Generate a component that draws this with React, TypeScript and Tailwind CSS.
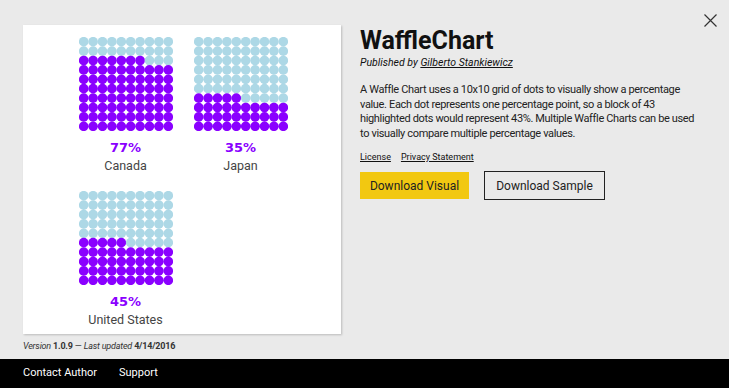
const PURPLE = "#8a00ff";
const LIGHT = "#add8e6";

type Waffle = { value: number; label: string };

const charts: Waffle[] = [
  { value: 77, label: "Canada" },
  { value: 35, label: "Japan" },
  { value: 45, label: "United States" },
];

function WaffleGrid({ value }: { value: number }) {
  const pitch = 9.44;
  const dots = [];
  for (let row = 0; row < 10; row++) {
    for (let col = 0; col < 10; col++) {
      // filled from the bottom row up, partial row fills from the left
      const fromBottom = 9 - row;
      const index = fromBottom * 10 + col;
      const on = index < value;
      dots.push(
        <circle
          key={`${row}-${col}`}
          cx={col * pitch + pitch / 2}
          cy={row * pitch + pitch / 2}
          r={4.85}
          fill={on ? PURPLE : LIGHT}
        />
      );
    }
  }
  return (
    <svg width="94" height="94" viewBox="0 0 94.4 94.4" className="block">
      {dots}
    </svg>
  );
}

function WaffleItem({ value, label }: Waffle) {
  return (
    <div className="flex h-[154px] w-[115px] flex-col items-center">
      <WaffleGrid value={value} />
      <div className="mt-[9px] font-['DejaVu_Sans'] text-[13px] leading-4 font-bold text-[#8a00ff]">
        {value}%
      </div>
      <div className="mt-[1px] text-[12.5px] leading-[18px] text-[#444]">{label}</div>
    </div>
  );
}

export default function App() {
  return (
    <div className="flex h-[388px] w-full flex-col bg-[#eaeaea] font-['Roboto',sans-serif] text-[#111]">
      <div className="relative flex flex-1 gap-[19px] pt-[25px] pl-[23px]">
        <div className="flex flex-col">
          <div className="flex h-[309px] w-[318px] flex-wrap content-start bg-white pt-[12px] pl-[45px] shadow-[1px_1px_2px_rgba(0,0,0,0.2)]">
            {charts.map((c) => (
              <WaffleItem key={c.label} {...c} />
            ))}
          </div>
          <p className="mt-[6px] text-[9px] leading-[12px] tracking-[-0.2px] text-[#333]">
            <i>Version</i> <b>1.0.9</b> — <i>Last updated</i> <b>4/14/2016</b>
          </p>
        </div>

        <div className="w-[340px] pt-[1px]">
          <h1 className="text-[25px] leading-[30px] font-bold text-[#111]">WaffleChart</h1>
          <p className="text-[10.5px] leading-[14px] italic">
            Published by <span className="underline">Gilberto Stankiewicz</span>
          </p>
          <p className="mt-[13px] text-[11px] leading-[14.5px] tracking-[-0.35px] text-[#222]">
            A Waffle Chart uses a 10x10 grid of dots to visually show a percentage
            <br />
            value. Each dot represents one percentage point, so a block of 43
            <br />
            highlighted dots would represent 43%. Multiple Waffle Charts can be used
            <br />
            to visually compare multiple percentage values.
          </p>
          <div className="mt-[10px] flex gap-[10px] text-[9px] leading-[12px]">
            <a className="underline">License</a>
            <a className="underline">Privacy Statement</a>
          </div>
          <div className="mt-[8px] flex items-center gap-[15px]">
            <button className="h-[27px] w-[109px] bg-[#f2c811] text-[12px] text-[#222]">
              Download Visual
            </button>
            <button className="h-[29px] w-[121px] border-[1.5px] border-[#222] text-[12px] text-[#222]">
              Download Sample
            </button>
          </div>
        </div>

        <button className="absolute top-[14px] right-[12px] h-[13px] w-[13px]" aria-label="Close">
          <svg viewBox="0 0 13 13" width="13" height="13">
            <path d="M0.5 0.5 L12.5 12.5 M12.5 0.5 L0.5 12.5" stroke="#333" strokeWidth="1.2" />
          </svg>
        </button>
      </div>

      <footer className="flex h-[29px] items-center gap-[22px] bg-black pl-[23px] text-[11px] text-white">
        <span>Contact Author</span>
        <span>Support</span>
      </footer>
    </div>
  );
}
